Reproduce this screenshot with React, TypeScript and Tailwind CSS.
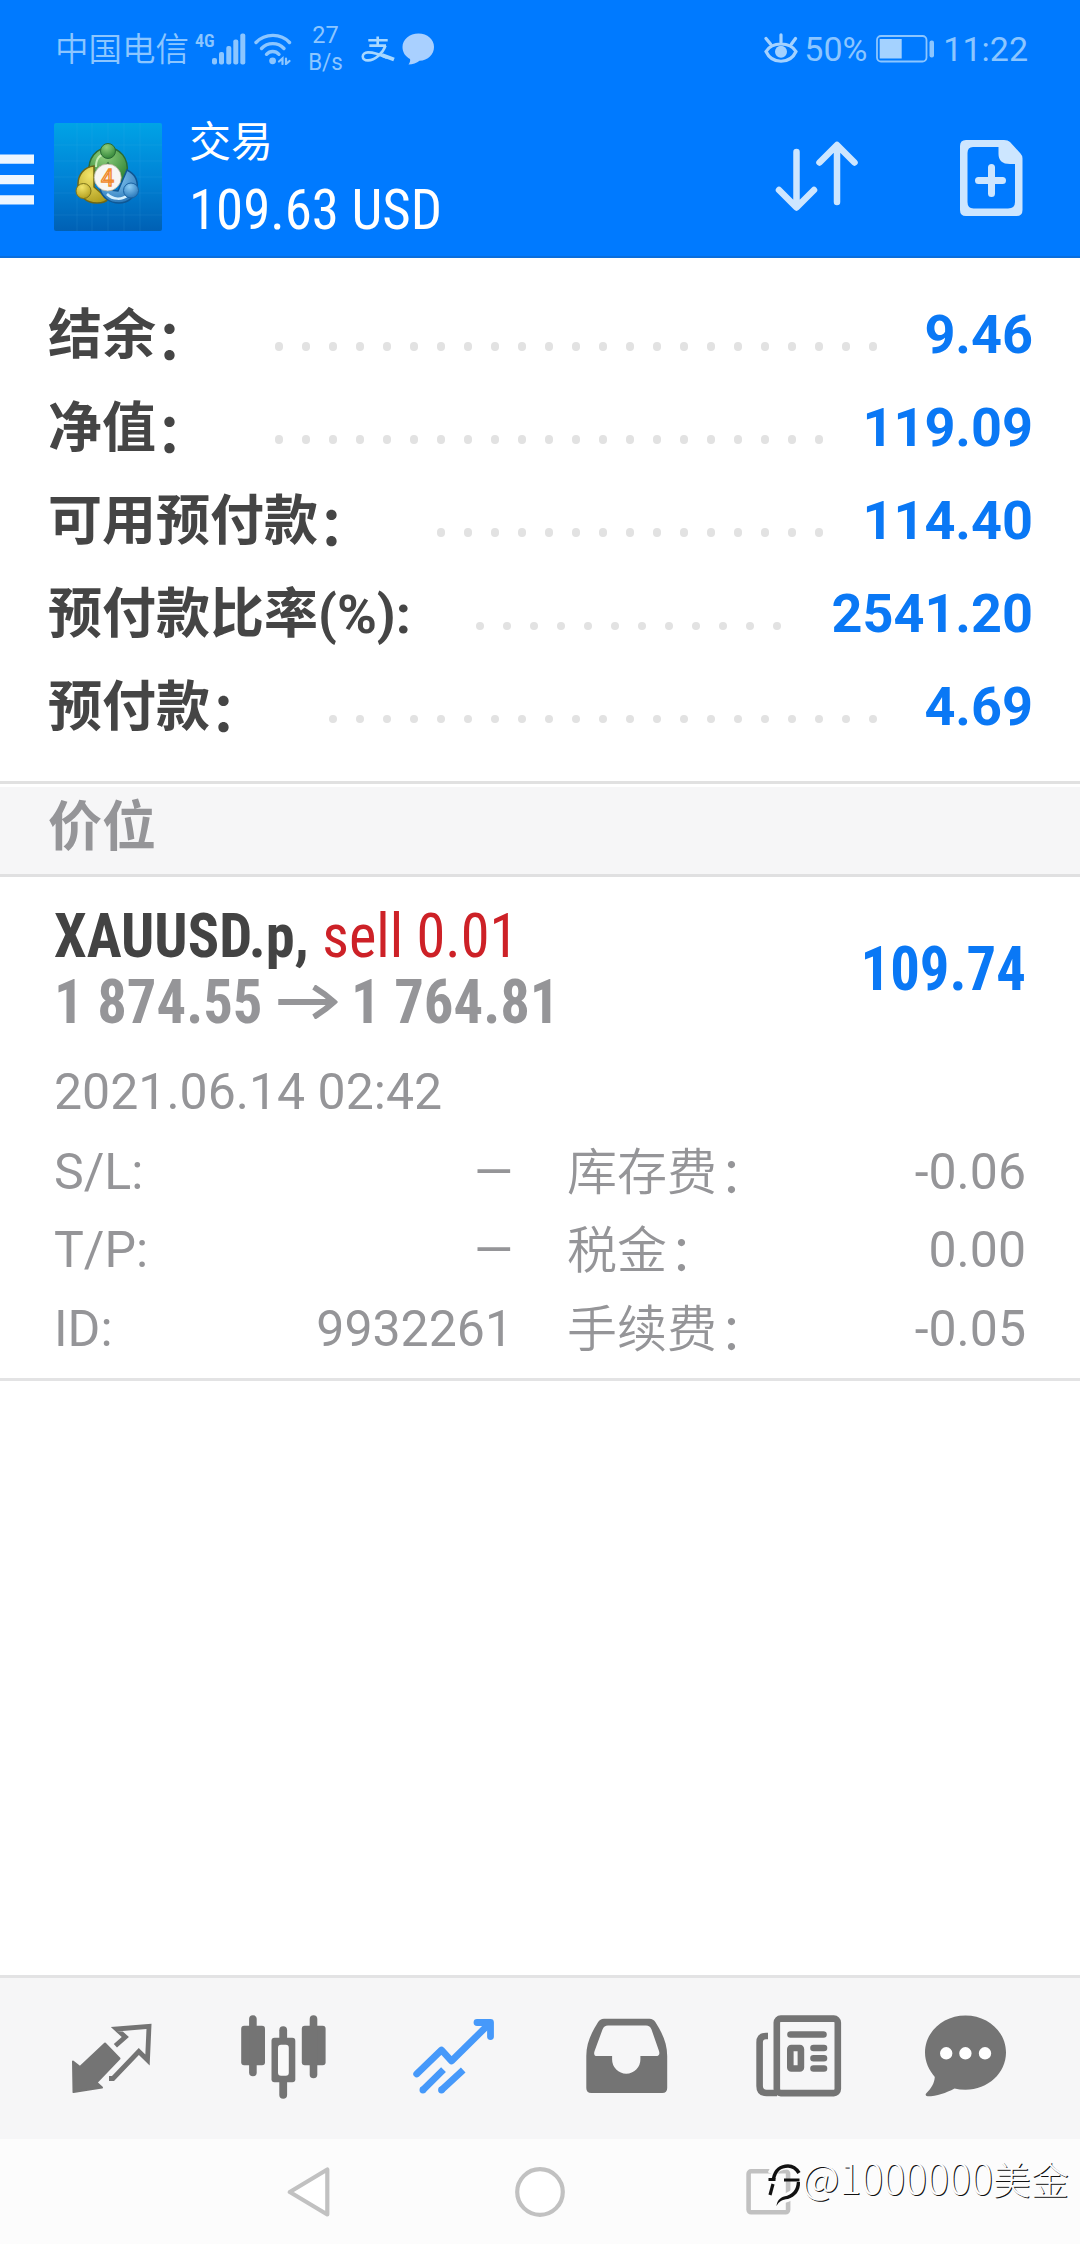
import React from 'react';

interface SummaryRow {
  label: string;
  colon: string;
  value: string;
  dots: number;
  labelWidth: string;
}

const summary: SummaryRow[] = [
  { label: '结余', colon: '：', value: '9.46', dots: 23, labelWidth: 'w-[218px]' },
  { label: '净值', colon: '：', value: '119.09', dots: 21, labelWidth: 'w-[218px]' },
  { label: '可用预付款', colon: '：', value: '114.40', dots: 15, labelWidth: 'w-[380px]' },
  { label: '预付款比率(%)', colon: ':', value: '2541.20', dots: 12, labelWidth: 'w-[419px]' },
  { label: '预付款', colon: '：', value: '4.69', dots: 21, labelWidth: 'w-[272px]' },
];

const details = [
  { left: 'S/L:', leftValue: '—', right: '库存费', rightValue: '-0.06' },
  { left: 'T/P:', leftValue: '—', right: '税金', rightValue: '0.00' },
  { left: 'ID:', leftValue: '9932261', right: '手续费', rightValue: '-0.05' },
];

function StatusBar() {
  return (
    <div className="flex h-[98px] items-center pl-[55px] pr-[52px] text-[34px] leading-none text-[#8cc6ff]">
      <span className="w-[140px] pt-0.5 text-[33.5px] font-[350] whitespace-nowrap">中国电信</span>
      <span className="mb-[18px] w-[17px] origin-left scale-x-[0.95] font-['Roboto_Condensed'] text-[19px] font-semibold">4G</span>
      <svg width="34" height="32" viewBox="0 0 34 32" fill="currentColor">
        <rect x="0" y="25" width="5" height="6.5" rx="2" />
        <rect x="7" y="19" width="5" height="12.5" rx="2" />
        <rect x="14.3" y="13" width="5" height="18.5" rx="2" />
        <rect x="21.3" y="6.5" width="5" height="25" rx="2" />
        <rect x="28.3" y="0.5" width="5" height="31" rx="2" />
      </svg>
      <svg className="ml-[7px]" width="40" height="32" viewBox="0 0 40 32" fill="none" stroke="currentColor" strokeWidth="3.4" strokeLinecap="round">
        <path d="M3 9.5C12 0 28 0 36.5 9.5" />
        <path d="M8.5 15.5C14.5 9 25 9 31 15.5" />
        <path d="M13.5 21.3C17 17.5 22.5 17.5 26 21.3" />
        <circle cx="19.6" cy="27.8" r="3.4" fill="currentColor" stroke="none" />
        <path d="M26 28.5l3.5-3v5.5M33 25.5v5.5l3.5-3" strokeWidth="2.2" />
      </svg>
      <div className="ml-[14px] w-[37px] text-center text-[23.5px] leading-[27.5px]">
        <div>27</div>
        <div className="scale-x-[0.95]">B/s</div>
      </div>
      <svg className="ml-[17px]" width="34" height="27" viewBox="0 0 34 27" fill="none" stroke="#a8d8ff" strokeWidth="2.6">
        <path d="M7.3 4.3h19.4M16.7.5v9M8.3 9.6H25" />
        <path d="M24.5 9.6C22 17 14 24.4 7 24.4c-7 0-7-8 0-8 6 0 14 3 19 5.4" />
        <path d="M21 19l12 4.5" strokeWidth="4" />
      </svg>
      <svg className="ml-[7px]" width="33" height="32" viewBox="0 0 33 32" fill="#a9d0ff">
        <path d="M16.5.5C25.5.5 32 6.5 32 14s-6 13.5-14.5 13.8C15 30 10.5 31.5 6.5 31.5 8 29.5 8.5 27.5 8 26 3.5 23.5.5 19.5.5 14 .5 6.5 7.5.5 16.5.5z" />
      </svg>

      <svg className="ml-auto" width="34" height="32" viewBox="0 0 34 32" fill="none" stroke="#a4d2ff" strokeWidth="3.2" strokeLinecap="round">
        <path d="M2 18.5C8 8.5 26 8.5 32 18.5 26 31.5 8 31.5 2 18.5z" />
        <path d="M17 9V1.8M6.5 11L2 5.5M27.5 11L31.5 5.5" />
        <circle cx="17" cy="18.8" r="6" fill="#a4d2ff" stroke="none" />
      </svg>
      <span className="ml-[6px] w-[72px]">50%</span>
      <svg width="58" height="28" viewBox="0 0 58 28">
        <rect x="1" y="1" width="49.5" height="25.5" rx="4" fill="none" stroke="#8cc6ff" strokeWidth="1.8" />
        <rect x="3.7" y="4" width="22" height="19.5" fill="#a4d2ff" />
        <rect x="53.5" y="5.5" width="4.5" height="17" rx="2" fill="#8cc6ff" />
      </svg>
      <span className="ml-[9px]">11:22</span>
    </div>
  );
}

function AppLogo() {
  return (
    <svg width="108" height="108" viewBox="0 0 108 108">
      <defs>
        <linearGradient id="tile" x1="0" y1="0" x2="0" y2="1">
          <stop offset="0" stopColor="#00a3e6" />
          <stop offset="0.5" stopColor="#0084d6" />
          <stop offset="1" stopColor="#0060b4" />
        </linearGradient>
        <radialGradient id="green" cx="0.4" cy="0.25" r="0.9">
          <stop offset="0" stopColor="#8fcf7c" />
          <stop offset="1" stopColor="#22792c" />
        </radialGradient>
        <radialGradient id="yellow" cx="0.4" cy="0.25" r="0.9">
          <stop offset="0" stopColor="#f2e46a" />
          <stop offset="1" stopColor="#a89413" />
        </radialGradient>
        <radialGradient id="blue" cx="0.4" cy="0.25" r="0.9">
          <stop offset="0" stopColor="#8ccdf5" />
          <stop offset="1" stopColor="#1667ae" />
        </radialGradient>
      </defs>
      <rect width="108" height="108" rx="2" fill="url(#tile)" />
      <path d="M23 0v108M38 0v108M54 0v108M70 0v108M86 0v108M0 22h108M0 38h108M0 54h108M0 70h108M0 92h108" stroke="#4fc0f0" strokeOpacity="0.12" />
      <path d="M35 49C34 35 42 25 54 25s21 10 19 25c-1 5-3 8-6 9L54 40 39 58c-3-2-4-5-4-9z" fill="url(#green)" stroke="#2a6b35" strokeWidth="1.5" />
      <path d="M42 44c0-9 4-13 11-13" fill="none" stroke="#c4ebb5" strokeWidth="2" />
      <path d="M40 43c-10 1-16 9-16 18 0 12 8 19 19 19 5 0 9-1 11-4L40 64z" fill="url(#yellow)" stroke="#6d6718" strokeWidth="1.5" />
      <path d="M73 47c8 4 11 11 10 18-2 9-9 15-18 15-10 0-17-6-19-14l18 2z" fill="url(#blue)" stroke="#0f5794" strokeWidth="1.5" />
      <path d="M53 71c6 6 15 6 21 1" fill="none" stroke="#d4effd" strokeWidth="2.5" />
      <circle cx="54" cy="28" r="7.5" fill="url(#green)" stroke="#2a6b35" />
      <circle cx="29.5" cy="68" r="7.5" fill="url(#yellow)" stroke="#7d7419" />
      <circle cx="77" cy="67.5" r="7.5" fill="url(#blue)" stroke="#1a62a2" />
      <circle cx="53.7" cy="54.5" r="13.5" fill="#f7f6f3" stroke="#b9b49c" strokeWidth="0.8" />
      <text x="53.5" y="62.5" textAnchor="middle" fontFamily="Roboto" fontSize="23" fill="#fff" stroke="#f08a2c" strokeWidth="1.4">4</text>
    </svg>
  );
}

function Header() {
  return (
    <header className="h-[258px] border-b-[2px] border-[#0a6edc] bg-[#007aff]">
      <StatusBar />
      <div className="flex h-[158px] items-start text-white">
        <svg className="mt-[56px]" width="34" height="52" viewBox="0 0 34 52" fill="#edf6ff">
          <path d="M0 .5h34v9.3H0zM0 21h34v9.3H0zM0 41.3h34v9.3H0z" />
        </svg>
        <div className="mt-[24.5px] ml-[20px]">
          <AppLogo />
        </div>
        <div className="mt-[8.5px] ml-[27px]">
          <div className="text-[42px] leading-[71px] font-normal">交易</div>
          <div className="origin-left scale-x-[0.98] font-['Roboto_Condensed'] text-[56px] leading-[64px]">109.63 USD</div>
        </div>
        <svg className="mt-[42px] ml-auto" width="88" height="74" viewBox="0 0 88 74" fill="none" stroke="#cde6ff" strokeWidth="6.5" strokeLinecap="round" strokeLinejoin="round">
          <path d="M24.5 12v55M7 50l17.5 17.5L42 50M65 62V6M47.5 22.5L65 5l17.5 17.5" />
        </svg>
        <svg className="mt-[41.5px] mr-[57px] ml-[100px]" width="63" height="76" viewBox="0 0 63 76">
          <path fillRule="evenodd" fill="#cde6ff" d="M6 0h38q4 0 6 2l10.5 11.5q2 2 2 5V70q0 6-6 6H6q-6 0-6-6V6Q0 0 6 0zM13 7Q7.500 7 7.500 13V62q0 6.500 6 6.500h34.500q7 0 7-6.500V24H50Q38.500 24 38.500 14V7z" />
          <path d="M18.5 41h24M31.5 28v26" transform="translate(0 -.5)" stroke="#cde6ff" strokeWidth="7" strokeLinecap="round" />
        </svg>
      </div>
    </header>
  );
}

function DotLine({ count }: { count: number }) {
  return (
    <div className="flex gap-[18.5px] pt-[23px]">
      {Array.from({ length: count }, (_, i) => (
        <span key={i} className="size-[8.5px] rounded-full bg-[#e2e2e2]" />
      ))}
    </div>
  );
}

function Summary() {
  return (
    <section className="h-[526px] border-b-[3px] border-[#e1e1e1] pt-[31px]">
      {summary.map((row) => (
        <div key={row.label} className="flex h-[93.1px] items-center pr-[47px] pb-px pl-[48px] text-[54px] leading-none font-bold">
          <div className={`${row.labelWidth} mr-[8.5px] shrink-0 pt-px whitespace-nowrap text-[#454545]`}>
            {row.label}
            {row.colon === ':' ? row.colon : <span className="inline-block translate-y-[6px]">{row.colon}</span>}
          </div>
          <DotLine count={row.dots} />
          <span className="ml-auto text-[#0a78f5]">{row.value}</span>
        </div>
      ))}
    </section>
  );
}

function Position() {
  return (
    <section className="h-[504px] border-b-[3px] border-[#e3e3e4] px-[54px] pt-[26px] text-[50px] text-[#959598]">
      <div className="flex items-center justify-between font-['Roboto_Condensed'] text-[61px] leading-[66px] font-bold">
        <div>
          <div className="origin-left scale-x-[0.957] whitespace-nowrap text-[#434343]">
            XAUUSD.p, <span className="font-normal text-[#cd2127]">sell 0.01</span>
          </div>
          <div className="flex origin-left scale-x-[0.962] items-center">
            <span>1 874.55</span>
            <svg className="mr-[14px] ml-[16px]" width="62" height="34" viewBox="0 0 62 34" fill="none" stroke="currentColor" strokeWidth="6">
              <path d="M0 17h57" />
              <path d="M37 2q12 7 21 15-9 8-21 15" />
            </svg>
            <span>1 764.81</span>
          </div>
        </div>
        <span className="origin-right scale-x-[0.962] text-[#0a78f5]">109.74</span>
      </div>
      <div className="mt-[18px] h-[78.5px] leading-[79px]">2021.06.14 02:42</div>
      {details.map((d) => (
        <div key={d.left} className="flex h-[78.5px] leading-[81px]">
          <span>{d.left}</span>
          <span className="ml-auto">{d.leftValue}</span>
          <div className="ml-[54px] flex w-[459px] justify-between">
            <span className="translate-y-px font-[350]">
              {d.right}
              <span className="inline-block translate-x-[2px] translate-y-[3px]">：</span>
            </span>
            <span>{d.rightValue}</span>
          </div>
        </div>
      ))}
    </section>
  );
}

function TabBar() {
  return (
    <nav className="flex h-[164px] items-start gap-[81.5px] border-t-[3px] border-[#e3e3e4] bg-[#f6f6f7] pt-[34px] pl-[67px] text-[#747474]">
      {/* Quotes */}
      <svg width="90" height="90" viewBox="0 0 90 90" className="shrink-0">
        <path d="M6 49.5L13 55 38 31.5 52.5 46.5 29.5 70.5 35 75.5 6.5 80z" fill="currentColor" stroke="currentColor" strokeWidth="2" strokeLinejoin="round" />
        <path d="M48.4 33.7L58.3 25 49.5 17 82 14.300 80.500 48 71.800 39.500 46 66.500h-4" fill="none" stroke="currentColor" strokeWidth="4.8" />
      </svg>
      {/* Charts */}
      <svg width="90" height="90" viewBox="0 0 90 90" className="shrink-0" fill="currentColor">
        <rect x="2.2" y="13.7" width="23.8" height="39.5" rx="3" />
        <rect x="10.1" y="3.3" width="7.6" height="61" rx="3.8" />
        <rect x="62.8" y="13.7" width="23.8" height="39.5" rx="3" />
        <rect x="70.7" y="3.3" width="7.6" height="63" rx="3.8" />
        <rect x="40.3" y="14.3" width="7.8" height="72.4" rx="3.9" />
        <rect x="32.5" y="25.7" width="23.8" height="44.5" rx="3" />
        <rect x="39" y="32.7" width="10.8" height="31" rx="3" fill="#f9f9f9" />
      </svg>
      {/* Trade */}
      <svg width="90" height="90" viewBox="0 0 90 90" className="shrink-0 text-[#4699fa]" fill="none" stroke="currentColor" strokeWidth="6.8" strokeLinejoin="round">
        <path d="M6.7 62L31.5 38 41.5 49 79 12" strokeLinecap="round" />
        <path d="M67 10.5H80.5V24.5" strokeLinecap="round" />
        <path d="M70 8h12v12z" fill="currentColor" stroke="none" />
        <path d="M12.9 78L33.5 57.7M31.5 78L53.2 58" />
        <path d="M12.9 78h.01M31.5 78h.01" strokeLinecap="round" />
      </svg>
      {/* History */}
      <svg width="90" height="90" viewBox="0 0 90 90" className="shrink-0" fill="currentColor">
        <path fillRule="evenodd" d="M22 6.7H67.5q4 0 6 3.5C81 22 85.2 32 85.2 44V76q0 5-5 5H9.3q-5 0-5-5V44C4.3 32 8.5 22 16 10.2q2-3.5 6-3.5zM26 13.5q-4 0-5.5 4L12.6 39q-1.6 5 2.4 5H30.1V47.5a14.15 14.15 0 0 0 28.3 0V44H74q4.5 0 3-5L69.5 17.5q-1.5-4-5.5-4z" />
      </svg>
      {/* News */}
      <svg width="90" height="90" viewBox="0 0 90 90" className="shrink-0" fill="none" stroke="currentColor" strokeWidth="6.6">
        <rect x="23.8" y="6.6" width="61" height="74.5" rx="4" />
        <path d="M15 24h-2q-6.4 0-6.4 6.5V74q0 7 7 7H24" />
        <path d="M37.5 22.5h33M60.5 36h10.5M60.5 46.3h10.5M60.5 56.5h10.5" strokeLinecap="round" />
        <rect x="37.3" y="36" width="10.6" height="20.5" rx="1" />
      </svg>
      {/* Messages */}
      <svg width="90" height="90" viewBox="0 0 90 90" className="shrink-0" fill="currentColor">
        <path d="M40.5 3.5C63 3.5 81 20 81 40.5S63 77.7 40.5 77.7q-6 0-11-1.2C21 81 12 84.3 2.5 84.3q-3-.8-1.2-3C6 77 9.5 71 9.8 65 4 58 0 50 0 40.5 0 20 18 3.5 40.5 3.5z" />
        <path fill="#fff" d="M27.4 41.3a6.2 6.2 0 1 1-12.4 0a6.2 6.2 0 1 1 12.4 0zM46.6 41.3a6.2 6.2 0 1 1-12.4 0a6.2 6.2 0 1 1 12.4 0zM66.2 41.3a6.2 6.2 0 1 1-12.4 0a6.2 6.2 0 1 1 12.4 0z" />
      </svg>
    </nav>
  );
}

function SystemNav() {
  return (
    <div className="relative flex h-[105px] items-start bg-[#fcfcfc] pt-[27px] pl-[287px] text-[#c1c1c1]">
      <svg width="44" height="52" viewBox="0 0 44 52" fill="#fff" stroke="currentColor" strokeWidth="4.2" strokeLinejoin="round">
        <path d="M40.3 3.5V48.5L2.8 26z" />
      </svg>
      <svg className="ml-[183px]" width="52" height="52" viewBox="0 0 52 52" fill="#fff" stroke="currentColor" strokeWidth="4.2">
        <circle cx="26" cy="26" r="22.8" />
      </svg>
      <svg className="ml-[180px]" width="46" height="52" viewBox="0 0 46 52" fill="none" stroke="currentColor" strokeWidth="4.6">
        <rect x="2.6" y="5.3" width="39.5" height="41" rx="2.5" />
      </svg>

      {/* Author stamp */}
      <div className="absolute top-[11px] left-[764px] flex items-start">
        <svg className="mt-[8px]" width="40" height="52" viewBox="0 0 40 52" fill="none">
          <path d="M8 16C11 9 16 7 23 7c9 0 13 6 13 14 0 11-6 18-22 21" stroke="#fcfcfc" strokeWidth="9" />
          <path d="M9.500 21C11 12 17 8 24 8c5 0 8 2 11 7" stroke="#111" strokeWidth="3.6" />
          <path d="M4.500 21.500h7M20 22h15.500" stroke="#111" strokeWidth="2.8" />
          <path d="M9 26L6 37" stroke="#111" strokeWidth="3.2" />
          <path d="M36 24C36.500 33 31 39 24 41 18 41.500 15 43.500 12.500 48 13 43 16 39.500 20 38.500 29 37 32.500 31 32.800 24z" fill="#111" />
        </svg>
        <span className="-ml-[2px] font-['Noto_Sans_CJK_SC'] text-[38px] leading-[52px] font-light whitespace-nowrap text-[#fdfdfd] [text-shadow:1px_1px_0.5px_#111]">
          <span className="text-[41px]">@1000000</span>美金
        </span>
      </div>
    </div>
  );
}

export default function App() {
  return (
    <div lang="zh-CN" className="flex h-[2244px] w-[1080px] flex-col overflow-hidden bg-white font-['Roboto','Noto_Sans_CJK_SC',sans-serif]">
      <Header />
      <Summary />
      <div className="mt-[3px] h-[90px] border-b-[3px] border-[#e0e0e1] bg-[#f6f6f7] pl-[48px] text-[54px] leading-[82px] font-bold text-[#959598]">价位</div>
      <Position />
      <div className="flex-1" />
      <TabBar />
      <SystemNav />
    </div>
  );
}
